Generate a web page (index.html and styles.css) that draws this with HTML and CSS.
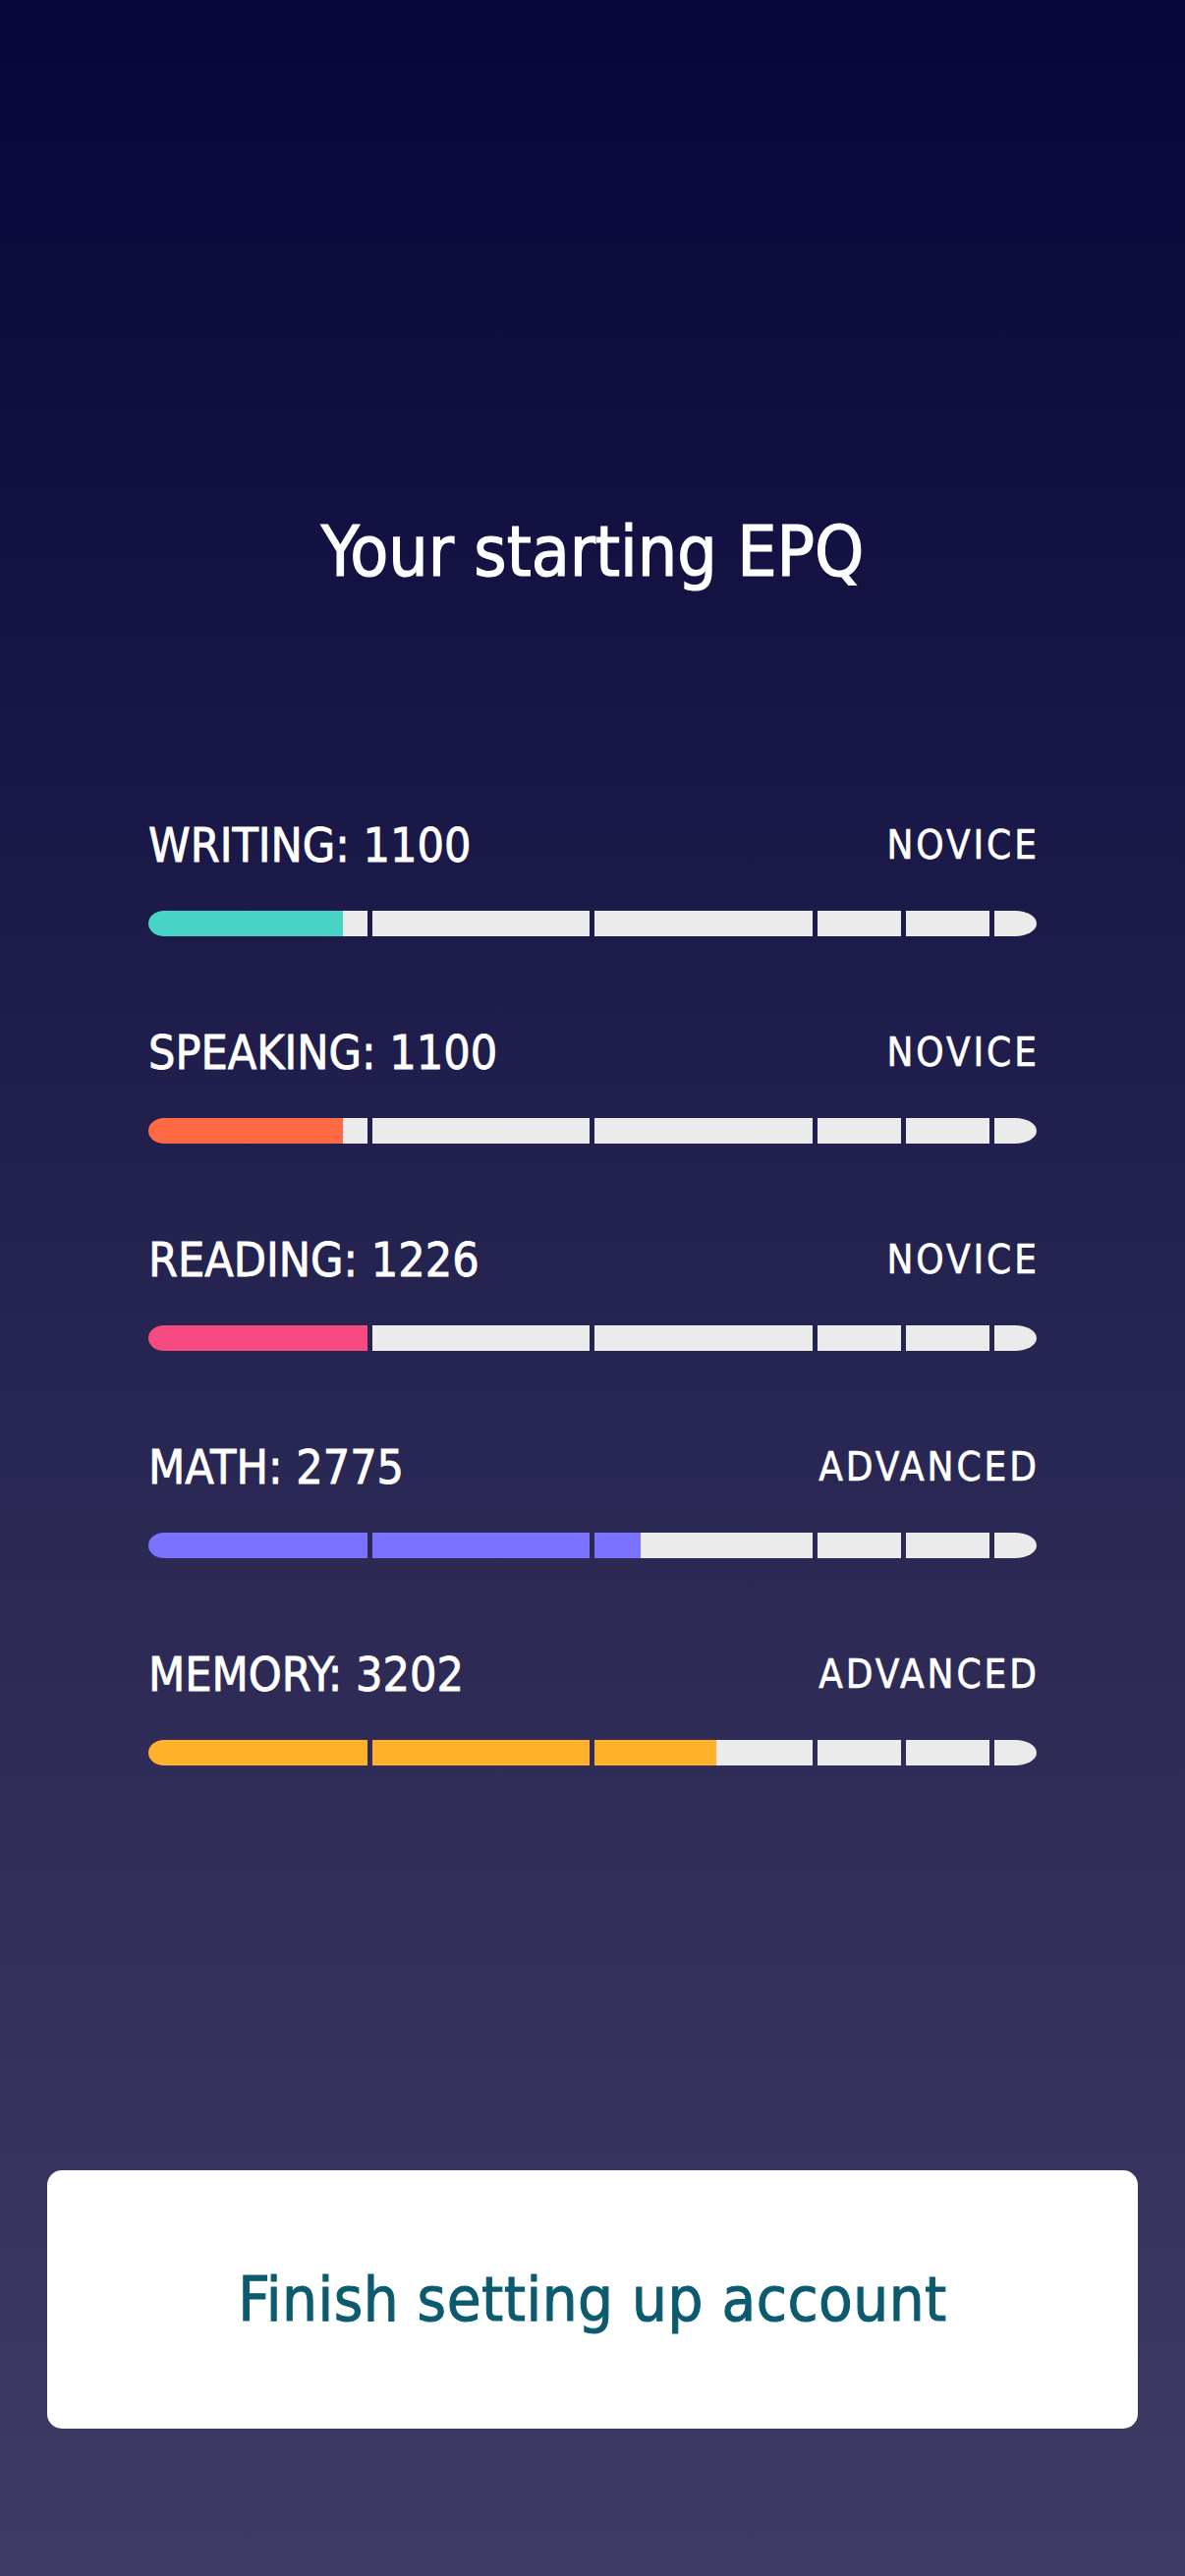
FILE: index.html
```html
<!DOCTYPE html>
<html lang="en">
<head>
<meta charset="utf-8">
<title>Your starting EPQ</title>
<link rel="stylesheet" href="styles.css">
</head>
<body>
<main class="screen">
  <h1 class="title">Your starting EPQ</h1>

  <section class="skills">
    <div class="skill skill--writing">
      <div class="skill-head">
        <span class="skill-name">WRITING: 1100</span>
        <span class="skill-level">NOVICE</span>
      </div>
      <div class="bar">
        <span class="seg seg-a" style="--fill: 89%"></span>
        <span class="seg seg-b"></span>
        <span class="seg seg-c"></span>
        <span class="seg seg-d"></span>
        <span class="seg seg-e"></span>
        <span class="seg seg-f"></span>
      </div>
    </div>

    <div class="skill skill--speaking">
      <div class="skill-head">
        <span class="skill-name">SPEAKING: 1100</span>
        <span class="skill-level">NOVICE</span>
      </div>
      <div class="bar">
        <span class="seg seg-a" style="--fill: 89%"></span>
        <span class="seg seg-b"></span>
        <span class="seg seg-c"></span>
        <span class="seg seg-d"></span>
        <span class="seg seg-e"></span>
        <span class="seg seg-f"></span>
      </div>
    </div>

    <div class="skill skill--reading">
      <div class="skill-head">
        <span class="skill-name">READING: 1226</span>
        <span class="skill-level">NOVICE</span>
      </div>
      <div class="bar">
        <span class="seg seg-a" style="--fill: 100%"></span>
        <span class="seg seg-b"></span>
        <span class="seg seg-c"></span>
        <span class="seg seg-d"></span>
        <span class="seg seg-e"></span>
        <span class="seg seg-f"></span>
      </div>
    </div>

    <div class="skill skill--math">
      <div class="skill-head">
        <span class="skill-name">MATH: 2775</span>
        <span class="skill-level">ADVANCED</span>
      </div>
      <div class="bar">
        <span class="seg seg-a" style="--fill: 100%"></span>
        <span class="seg seg-b" style="--fill: 100%"></span>
        <span class="seg seg-c" style="--fill: 21%"></span>
        <span class="seg seg-d"></span>
        <span class="seg seg-e"></span>
        <span class="seg seg-f"></span>
      </div>
    </div>

    <div class="skill skill--memory">
      <div class="skill-head">
        <span class="skill-name">MEMORY: 3202</span>
        <span class="skill-level">ADVANCED</span>
      </div>
      <div class="bar">
        <span class="seg seg-a" style="--fill: 100%"></span>
        <span class="seg seg-b" style="--fill: 100%"></span>
        <span class="seg seg-c" style="--fill: 56%"></span>
        <span class="seg seg-d"></span>
        <span class="seg seg-e"></span>
        <span class="seg seg-f"></span>
      </div>
    </div>
  </section>

  <button class="finish" type="button">Finish setting up account</button>
</main>
</body>
</html>
```

FILE: styles.css
```css
* {
  box-sizing: border-box;
}

html, body {
  margin: 0;
  padding: 0;
}

body {
  background: linear-gradient(to bottom, #07053a 0%, #1c1a49 35%, #2c2a55 62%, #3e3c65 100%);
  font-family: "DejaVu Sans Condensed", "DejaVu Sans", sans-serif;
  font-stretch: condensed;
  color: #ffffff;
}

.screen {
  width: 1206px;
  height: 2622px;
  display: flex;
  flex-direction: column;
  padding: 526px 0 150px;
}

.title {
  margin: 0;
  font-size: 71px;
  line-height: 72px;
  font-weight: 400;
  letter-spacing: 0;
  text-align: center;
  -webkit-text-stroke: 1.2px #ffffff;
}

.skills {
  display: flex;
  flex-direction: column;
  gap: 93.5px;
  margin: 237.5px 151px 0;
}

.skill {
  display: flex;
  flex-direction: column;
  gap: 42.5px;
}

.skill--writing { --c: #47d3c6; }
.skill--speaking { --c: #ff6a45; }
.skill--reading { --c: #f74a80; }
.skill--math { --c: #7a73ff; }
.skill--memory { --c: #ffb12b; }

.skill-head {
  display: flex;
  justify-content: space-between;
  align-items: center;
}

.skill-name {
  font-size: 48px;
  line-height: 49px;
  letter-spacing: 0;
  -webkit-text-stroke: 0.8px #ffffff;
}

.skill-level {
  font-size: 40px;
  line-height: 40px;
  letter-spacing: 3px;
  margin-right: -3px;
  -webkit-text-stroke: 0.6px #ffffff;
}

.bar {
  display: flex;
  gap: 5px;
  height: 26px;
}

.seg {
  display: block;
  height: 100%;
  background: linear-gradient(to right, var(--c) var(--fill, 0%), #ebebeb var(--fill, 0%));
}

.seg-a { flex: 222 1 0; border-radius: 16px 0 0 16px / 13px 0 0 13px; }
.seg-b { flex: 221 1 0; }
.seg-c { flex: 221 1 0; }
.seg-d { flex: 85 1 0; }
.seg-e { flex: 85 1 0; }
.seg-f { flex: 43 1 0; border-radius: 0 22px 22px 0 / 0 13px 13px 0; }

.finish {
  margin: auto 48px 0;
  height: 263px;
  border: none;
  border-radius: 15px;
  background: #ffffff;
  color: #0b5a6e;
  font-family: inherit;
  font-stretch: condensed;
  font-size: 63px;
  letter-spacing: 0.5px;
  -webkit-text-stroke: 1px #0b5a6e;
  cursor: pointer;
}
```
